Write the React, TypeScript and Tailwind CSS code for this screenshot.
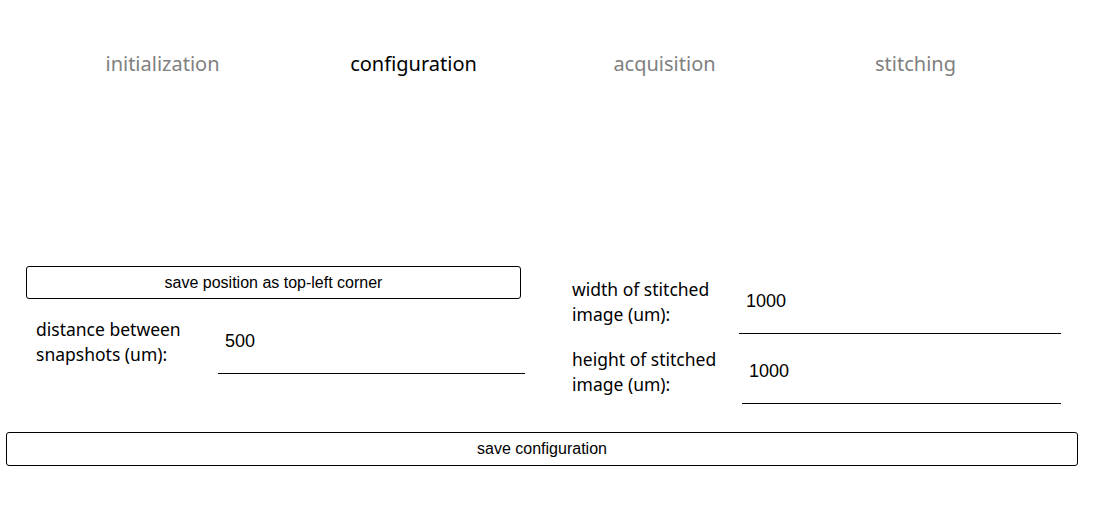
export default function App() {
  const tabs = [
    { label: 'initialization', active: false },
    { label: 'configuration', active: true },
    { label: 'acquisition', active: false },
    { label: 'stitching', active: false },
  ]

  return (
    <div className="h-[515px] w-full bg-white">
      <nav className="ml-[37px] grid w-[1004px] grid-cols-4 pt-[50px]">
        {tabs.map((tab) => (
          <div
            key={tab.label}
            className={`text-center font-['Noto_Sans',sans-serif] text-[20px] leading-[28px] ${
              tab.active ? 'text-black' : 'text-[#808080]'
            }`}
          >
            {tab.label}
          </div>
        ))}
      </nav>

      <div className="mt-[188px] flex items-start">
        <section className="ml-[26px] flex w-[499px] flex-col">
          <button
            type="button"
            className="h-[33px] w-[495px] rounded-[3px] border border-black bg-white font-['Liberation_Sans',Arial,sans-serif] text-[16px] text-black"
          >
            save position as top-left corner
          </button>
          <div className="mt-[17px] flex items-start justify-between pl-[10px]">
            <FieldLabel first="distance between" second="snapshots (um):" />
            <FieldInput value="500" width="w-[307px]" />
          </div>
        </section>

        <section className="ml-[47px] mt-[10px] flex w-[489px] flex-col gap-[12px]">
          <div className="flex items-start justify-between">
            <FieldLabel first="width of stitched" second="image (um):" />
            <FieldInput value="1000" width="w-[322px]" />
          </div>
          <div className="flex items-start justify-between">
            <FieldLabel first="height of stitched" second="image (um):" />
            <FieldInput value="1000" width="w-[319px]" />
          </div>
        </section>
      </div>

      <button
        type="button"
        className="ml-[6px] mt-[28px] h-[34px] w-[1072px] rounded-[3px] border border-black bg-white font-['Liberation_Sans',Arial,sans-serif] text-[16px] text-black"
      >
        save configuration
      </button>
    </div>
  )
}

function FieldLabel({ first, second }: { first: string; second: string }) {
  return (
    <div className="pt-[1px] font-['Noto_Sans',sans-serif] text-[17.5px] leading-[25px] text-black">
      <div>{first}</div>
      <div>{second}</div>
    </div>
  )
}

function FieldInput({ value, width }: { value: string; width: string }) {
  return (
    <div
      className={`${width} border-b border-black pb-[20px] pl-[7px] pt-[13px] font-['Liberation_Sans',Arial,sans-serif] text-[18px] leading-[24px] text-black`}
    >
      {value}
    </div>
  )
}
